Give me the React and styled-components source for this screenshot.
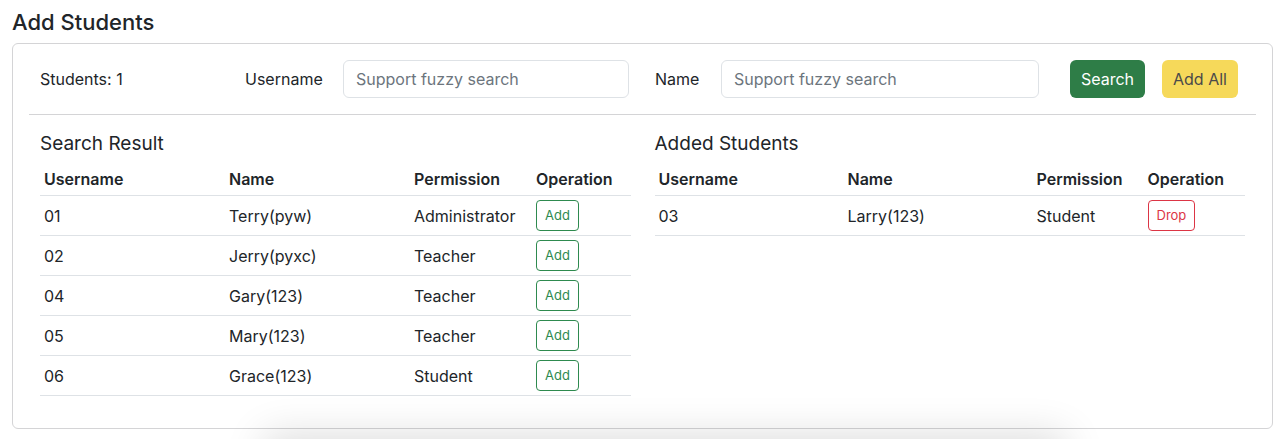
import styled, { createGlobalStyle } from "styled-components";

const GlobalStyle = createGlobalStyle`
  * { box-sizing: border-box; }
  body {
    margin: 0;
    font-family: Inter, "Noto Sans", sans-serif;
    color: #212529;
    background: #fff;
  }
`;

const Page = styled.div`
  padding: 10px 12px 0;
`;

const Title = styled.h2`
  margin: 0 0 9px;
  font-size: 22px;
  font-weight: 450;
  line-height: 24px;
`;

const Card = styled.div`
  border: 1px solid #d4d4d6;
  border-radius: 6px;
  padding: 16px;
  background: #fff;
`;

const Toolbar = styled.div`
  display: flex;
  align-items: center;
  padding: 0 0 16px 11px;
  border-bottom: 1px solid #d4d4d6;
`;

const Count = styled.div`
  width: 205px;
  font-size: 16px;
`;

const Field = styled.label`
  display: flex;
  align-items: center;
  margin-right: ${(p) => p.$after}px;
  font-size: 16px;
`;

const FieldLabel = styled.span`
  width: ${(p) => p.$width}px;
  white-space: nowrap;
`;

const Input = styled.input`
  width: ${(p) => p.$width}px;
  height: 38px;
  padding: 0 12px;
  border: 1px solid #dee2e6;
  border-radius: 6px;
  font: inherit;
  font-size: 16px;
  color: #212529;
  outline: none;
  &::placeholder { color: #6c757d; }
`;

const Button = styled.button`
  height: 38px;
  width: ${(p) => p.$width}px;
  padding: 0;
  border: none;
  border-radius: 6px;
  font: inherit;
  font-size: 16px;
  margin-right: ${(p) => p.$after || 0}px;
  color: ${(p) => (p.$variant === "warning" ? "#4a4a4a" : "#fff")};
  background: ${(p) => (p.$variant === "warning" ? "#f6d95a" : "#2e7d47")};
`;

const Columns = styled.div`
  display: grid;
  grid-template-columns: 1fr 1fr;
  column-gap: 24px;
  padding: 16px 11px 0;
`;

const Section = styled.section``;

const SectionTitle = styled.h5`
  margin: 0 0 8px;
  font-size: 19px;
  font-weight: 400;
  line-height: 25px;
`;

const Table = styled.table`
  width: 100%;
  border-collapse: collapse;
  table-layout: fixed;
  margin-bottom: 16px;
  font-size: 16px;
`;

const Th = styled.th`
  text-align: left;
  font-weight: 600;
  padding: 4px;
  height: 31px;
  border-bottom: 1px solid #dee2e6;
`;

const Td = styled.td`
  padding: 4px;
  height: 40px;
  border-bottom: 1px solid #dee2e6;
  & > span { position: relative; top: 1px; }
`;

const SmallButton = styled.button`
  height: 31px;
  padding: 0 8px;
  background: #fff;
  border: 1px solid ${(p) => (p.$danger ? "#dc3545" : "#2e8a4f")};
  color: ${(p) => (p.$danger ? "#dc3545" : "#2e8a4f")};
  border-radius: 4px;
  font: inherit;
  font-size: 13px;
`;

const Shade = styled.div`
  width: 790px;
  height: 60px;
  margin: 12px 0 0 258px;
  background: #fff;
  box-shadow: 0 0 40px 6px rgba(0, 0, 0, 0.14);
`;

const results = [
  { id: "01", name: "Terry(pyw)", role: "Administrator" },
  { id: "02", name: "Jerry(pyxc)", role: "Teacher" },
  { id: "04", name: "Gary(123)", role: "Teacher" },
  { id: "05", name: "Mary(123)", role: "Teacher" },
  { id: "06", name: "Grace(123)", role: "Student" },
];

const added = [{ id: "03", name: "Larry(123)", role: "Student" }];

function StudentTable({ rows, widths, danger }) {
  return (
    <Table>
      <colgroup>
        {widths.map((w, i) => (
          <col key={i} style={{ width: w }} />
        ))}
        <col />
      </colgroup>
      <thead>
        <tr>
          <Th>Username</Th>
          <Th>Name</Th>
          <Th>Permission</Th>
          <Th>Operation</Th>
        </tr>
      </thead>
      <tbody>
        {rows.map(({ id, name, role }) => (
          <tr key={id}>
            <Td><span>{id}</span></Td>
            <Td><span>{name}</span></Td>
            <Td><span>{role}</span></Td>
            <Td>
              <SmallButton $danger={danger}>{danger ? "Drop" : "Add"}</SmallButton>
            </Td>
          </tr>
        ))}
      </tbody>
    </Table>
  );
}

export default function App() {
  return (
    <Page>
      <GlobalStyle />
      <Title>Add Students</Title>
      <Card>
        <Toolbar>
          <Count>Students: 1</Count>
          <Field $after={26}>
            <FieldLabel $width={98}>Username</FieldLabel>
            <Input $width={286} placeholder="Support fuzzy search" />
          </Field>
          <Field $after={31}>
            <FieldLabel $width={66}>Name</FieldLabel>
            <Input $width={318} placeholder="Support fuzzy search" />
          </Field>
          <Button $width={75} $after={17}>Search</Button>
          <Button $width={76} $variant="warning">Add All</Button>
        </Toolbar>
        <Columns>
          <Section>
            <SectionTitle>Search Result</SectionTitle>
            <StudentTable rows={results} widths={["185px", "185px", "122px"]} />
          </Section>
          <Section>
            <SectionTitle>Added Students</SectionTitle>
            <StudentTable rows={added} widths={["189px", "189px", "111px"]} danger />
          </Section>
        </Columns>
      </Card>
      <Shade />
    </Page>
  );
}
